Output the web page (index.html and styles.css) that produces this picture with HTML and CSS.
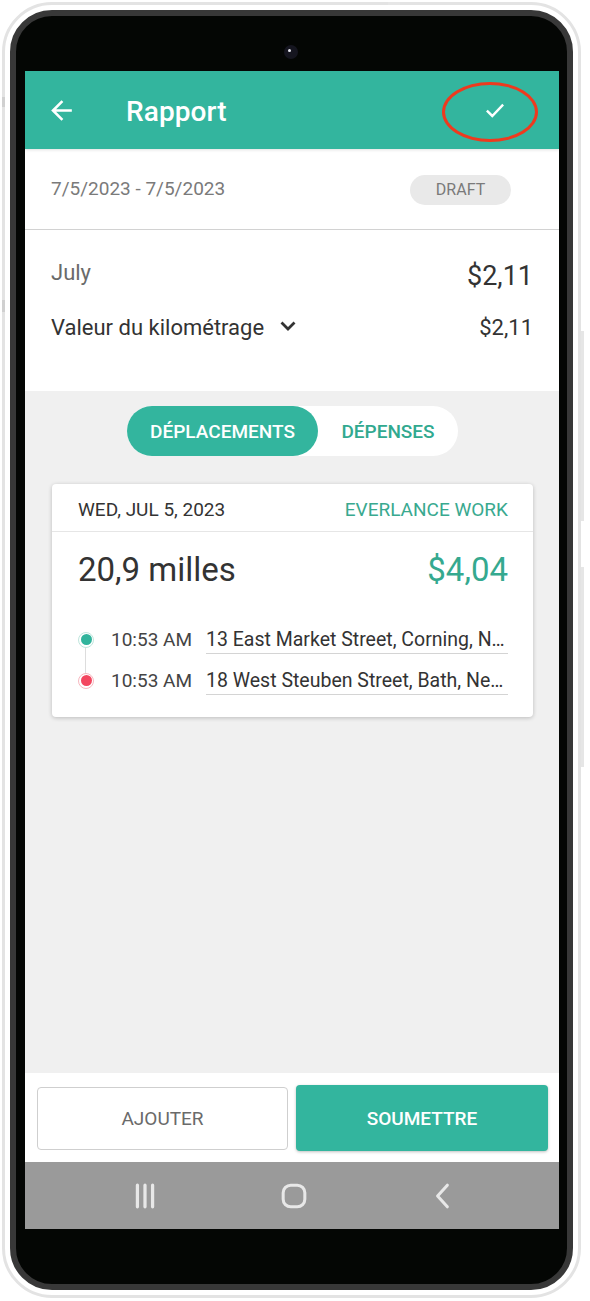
FILE: index.html
```html
<!DOCTYPE html>
<html lang="fr">
<head>
<meta charset="utf-8">
<title>Rapport</title>
<link rel="stylesheet" href="styles.css">
</head>
<body>
<div class="device">
  <span class="btn-side btn-top"></span>
  <span class="btn-side btn-left1"></span>
  <span class="btn-side btn-left2"></span>
  <span class="btn-side btn-right1"></span>
  <span class="btn-side btn-right2"></span>
  <div class="phone">
    <div class="camera"><span class="lens-dot"></span></div>
    <div class="screen">
      <header class="appbar">
        <svg class="back" viewBox="0 0 24 24" width="31" height="31"><path d="M20 11H7.83l5.59-5.59L12 4l-8 8 8 8 1.41-1.41L7.83 13H20v-2z" fill="#fff"/></svg>
        <h1 class="title">Rapport</h1>
        <svg class="check" viewBox="0 0 24 24" width="26" height="26"><path d="M4.5 12.5l5 5 10-10.5" fill="none" stroke="#fff" stroke-width="2.2"/></svg>
        <span class="highlight"></span>
      </header>

      <section class="info">
        <div class="daterow">
          <span class="daterange">7/5/2023 - 7/5/2023</span>
          <span class="pill">DRAFT</span>
        </div>
        <div class="summary">
          <div class="sumrow">
            <span class="month">July</span>
            <span class="total">$2,11</span>
          </div>
          <div class="sumrow sumrow-sub">
            <span class="label">Valeur du kilométrage
              <svg class="chev" viewBox="0 0 24 24" width="24" height="24"><path d="M5.5 8.5l6.5 6.5 6.5-6.5" fill="none" stroke="#333" stroke-width="2.8"/></svg>
            </span>
            <span class="subtotal">$2,11</span>
          </div>
        </div>
      </section>

      <main class="content">
        <div class="segment">
          <span class="seg seg-active">DÉPLACEMENTS</span>
          <span class="seg">DÉPENSES</span>
        </div>

        <article class="card">
          <div class="card-head">
            <span class="card-date">WED, JUL 5, 2023</span>
            <span class="card-tag">EVERLANCE WORK</span>
          </div>
          <div class="card-body">
            <div class="amount-row">
              <span class="miles">20,9 milles</span>
              <span class="money">$4,04</span>
            </div>
            <div class="stops">
              <div class="stop">
                <span class="dot dot-start"></span>
                <span class="time">10:53 AM</span>
                <span class="addr">13 East Market Street, Corning, New York</span>
              </div>
              <div class="stop">
                <span class="dot dot-end"></span>
                <span class="time">10:53 AM</span>
                <span class="addr">18 West Steuben Street, Bath, New York</span>
              </div>
            </div>
          </div>
        </article>
      </main>

      <footer class="actions">
        <button class="btn btn-outline">AJOUTER</button>
        <button class="btn btn-primary">SOUMETTRE</button>
      </footer>

      <nav class="navbar">
        <svg viewBox="0 0 24 24" width="26" height="26"><path d="M5 2v20M12 2v20M19 2v20" stroke="#e8e8e8" stroke-width="3" stroke-linecap="round"/></svg>
        <svg viewBox="0 0 24 24" width="26" height="26"><rect x="2" y="2" width="20" height="20" rx="7" fill="none" stroke="#e8e8e8" stroke-width="2.8"/></svg>
        <svg viewBox="0 0 24 24" width="26" height="26"><path d="M16 2L7 12l9 10" fill="none" stroke="#e8e8e8" stroke-width="2.8" stroke-linecap="round" stroke-linejoin="round"/></svg>
      </nav>
    </div>
  </div>
</div>
</body>
</html>
```

FILE: styles.css
```css
* { box-sizing: border-box; }

html, body {
  margin: 0;
  padding: 0;
  background: #fff;
  overflow: hidden;
}

body {
  font-family: Roboto, "Noto Sans", "Liberation Sans", sans-serif;
  width: 590px;
  height: 1301px;
}

.device {
  position: relative;
  margin: 2px 0 0 2px;
  width: 579px;
  height: 1296px;
  border: 3px solid #e3e3e3;
  border-radius: 50px;
  padding: 5px;
  background: #fff;
}

.btn-side {
  position: absolute;
  background: #e6e6e6;
}
.btn-top { top: -3px; left: 383px; width: 12px; height: 3px; }
.btn-left1 { left: -3px; top: 92px; width: 3px; height: 10px; background: #d0d0d0; }
.btn-left2 { left: -3px; top: 295px; width: 3px; height: 12px; background: #d0d0d0; }
.btn-right1 { right: -6px; top: 326px; width: 3px; height: 190px; }
.btn-right2 { right: -6px; top: 562px; width: 3px; height: 200px; }

.phone {
  position: relative;
  width: 563px;
  height: 1280px;
  background: #040604;
  border: 6px solid #383838;
  border-radius: 42px;
  padding: 55px 8px 55px 9px;
}

.camera {
  position: absolute;
  left: 268px;
  top: 29px;
  width: 14px;
  height: 14px;
  border-radius: 50%;
  background: #15151f;
  display: flex;
  align-items: center;
  justify-content: center;
}
.lens-dot {
  width: 3px;
  height: 3px;
  border-radius: 50%;
  background: #e8e8f0;
  margin: 0 3px 4px 0;
}

.screen {
  width: 534px;
  height: 1158px;
  background: #f0f0f0;
  display: flex;
  flex-direction: column;
  overflow: hidden;
}

/* App bar */
.appbar {
  position: relative;
  flex: 0 0 78px;
  background: #33b59e;
  display: flex;
  align-items: center;
  padding: 0 0 0 21px;
  box-shadow: 0 1px 3px rgba(0,0,0,0.12);
  z-index: 2;
}
.back { flex: none; }
.title {
  margin: 2px 0 0 49px;
  flex: 1;
  color: #fff;
  font-size: 28px;
  font-weight: 500;
  letter-spacing: 0.1px;
}
.check {
  flex: none;
  margin-right: 51px;
}
.highlight {
  position: absolute;
  left: 417px;
  top: 11px;
  width: 96px;
  height: 60px;
  border: 3px solid #ee3a1e;
  border-radius: 50%;
}

/* Info */
.info {
  background: #fff;
  flex: none;
}
.daterow {
  height: 81px;
  border-bottom: 1px solid #d2d2d2;
  display: flex;
  align-items: center;
  justify-content: space-between;
  padding: 0 48px 0 26px;
}
.daterange {
  color: #7a7a7a;
  font-size: 19px;
  margin-top: -2px;
}
.pill {
  width: 101px;
  height: 30px;
  border-radius: 15px;
  background: #e9e9e9;
  color: #7a7a7a;
  font-size: 16px;
  display: flex;
  align-items: center;
  justify-content: center;
  margin-top: 1px;
}
.summary {
  padding: 27px 26px 45px;
}
.sumrow {
  height: 38px;
  display: flex;
  align-items: center;
  justify-content: space-between;
}
.sumrow-sub {
  margin-top: 13px;
}
.month {
  color: #6a6a6a;
  font-size: 22px;
  margin-top: -8px;
}
.total {
  color: #333;
  font-size: 27px;
}
.label {
  color: #333;
  font-size: 22px;
  display: flex;
  align-items: center;
  gap: 12px;
}
.chev { flex: none; margin-top: -2px; }
.subtotal {
  color: #333;
  font-size: 22px;
}

/* Content */
.content {
  flex: 1;
  padding: 15px 26px 0 27px;
  display: flex;
  flex-direction: column;
  align-items: center;
}
.segment {
  display: flex;
  height: 50px;
  background: #fff;
  border-radius: 25px;
}
.seg {
  display: flex;
  align-items: center;
  justify-content: center;
  width: 140px;
  height: 50px;
  border-radius: 25px;
  color: #31a98f;
  font-size: 19px;
  font-weight: 500;
}
.seg-active {
  width: 191px;
  background: #33b59e;
  color: #fff;
}

.card {
  align-self: stretch;
  margin-top: 28px;
  background: #fff;
  border-radius: 4px;
  box-shadow: 0 1px 4px rgba(0,0,0,0.22);
}
.card-head {
  height: 48px;
  border-bottom: 1px solid #e6e6e6;
  display: flex;
  align-items: center;
  justify-content: space-between;
  padding: 3px 25px 0 26px;
}
.card-date {
  color: #333;
  font-size: 19px;
}
.card-tag {
  color: #39a98f;
  font-size: 19px;
}
.card-body {
  padding: 17px 25px 23px 26px;
}
.amount-row {
  display: flex;
  align-items: center;
  justify-content: space-between;
  height: 40px;
}
.miles {
  color: #333;
  font-size: 33px;
}
.money {
  color: #35a98f;
  font-size: 33px;
}
.stops {
  margin-top: 37px;
  display: flex;
  flex-direction: column;
  gap: 14px;
  position: relative;
}
.stops::before {
  content: "";
  position: absolute;
  left: 7px;
  top: 13px;
  height: 41px;
  width: 1px;
  background: #ddd;
}
.stop {
  display: flex;
  align-items: center;
  height: 27px;
}
.dot {
  position: relative;
  flex: none;
  width: 16px;
  height: 16px;
  border-radius: 50%;
  display: flex;
  align-items: center;
  justify-content: center;
  background: #fff;
  z-index: 1;
}
.dot::after {
  content: "";
  width: 11px;
  height: 11px;
  border-radius: 50%;
}
.dot-start { border: 1px solid #bfe6dd; }
.dot-start::after { background: #31b49c; }
.dot-end { border: 1px solid #f7b8c0; }
.dot-end::after { background: #f3465f; }
.time {
  flex: none;
  margin-left: 17px;
  color: #444;
  font-size: 19px;
  width: 95px;
}
.addr {
  flex: 1;
  min-width: 0;
  color: #333;
  font-size: 19.5px;
  line-height: 26px;
  white-space: nowrap;
  overflow: hidden;
  text-overflow: ellipsis;
  border-bottom: 1px solid #d4d4d4;
  margin-top: 1px;
}

/* Actions */
.actions {
  flex: 0 0 89px;
  background: #fff;
  display: grid;
  grid-template-columns: 251px 252px;
  gap: 8px;
  padding: 12px 11px 11px 12px;
  align-items: center;
}
.btn {
  font-family: inherit;
  font-size: 19px;
  border-radius: 4px;
  cursor: pointer;
}
.btn-outline {
  height: 63px;
  background: #fff;
  border: 1.5px solid #cfcfcf;
  color: #6a6a6a;
  font-weight: 400;
}
.btn-primary {
  height: 66px;
  background: #33b59e;
  border: none;
  color: #fff;
  font-weight: 500;
  box-shadow: 0 1px 3px rgba(0,0,0,0.25);
}

/* Nav */
.navbar {
  flex: 0 0 67px;
  background: #9a9a9a;
  display: flex;
  align-items: center;
  justify-content: space-between;
  padding: 0 103px 0 107px;
}
```
